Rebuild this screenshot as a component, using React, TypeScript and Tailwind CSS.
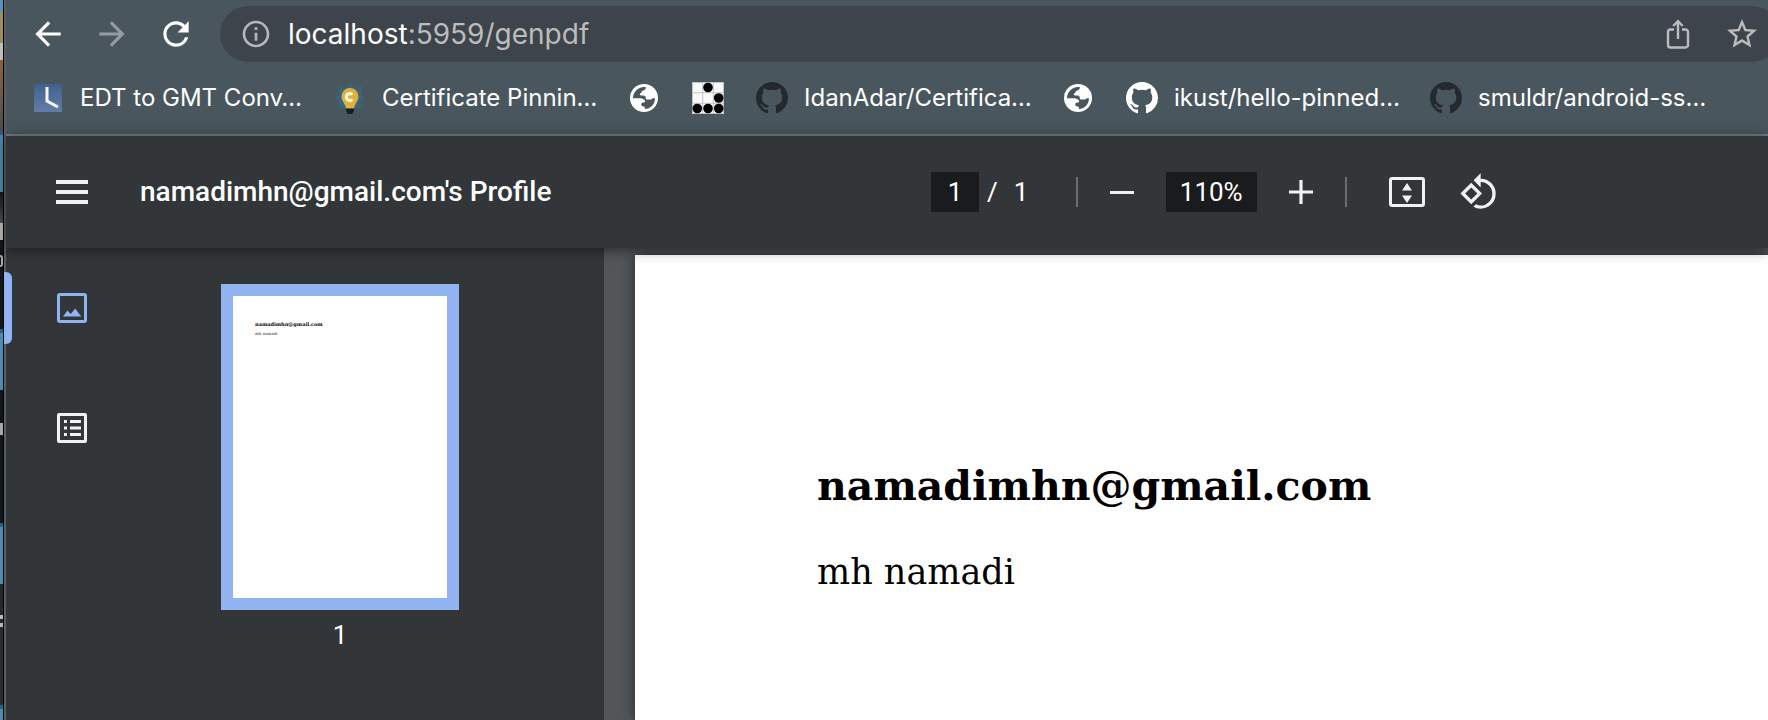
import type { ReactNode } from "react";
import {
  MdArrowBack,
  MdArrowForward,
  MdInfoOutline,
  MdRefresh,
  MdRotate90DegreesCcw,
  MdStarBorder,
} from "react-icons/md";

const GITHUB_PATH =
  "M8 0C3.58 0 0 3.58 0 8c0 3.54 2.29 6.53 5.47 7.59.4.07.55-.17.55-.38 0-.19-.01-.82-.01-1.49-2.01.37-2.53-.49-2.69-.94-.09-.23-.48-.94-.82-1.13-.28-.15-.68-.52-.01-.53.63-.01 1.08.58 1.23.82.72 1.21 1.87.87 2.33.66.07-.52.28-.87.51-1.07-1.78-.2-3.64-.89-3.64-3.95 0-.87.31-1.59.82-2.15-.08-.2-.36-1.02.08-2.12 0 0 .67-.21 2.2.82.64-.18 1.32-.27 2-.27s1.36.09 2 .27c1.53-1.04 2.2-.82 2.2-.82.44 1.1.16 1.92.08 2.12.51.56.82 1.27.82 2.15 0 3.07-1.87 3.75-3.65 3.95.29.25.54.73.54 1.48 0 1.07-.01 1.93-.01 2.2 0 .21.15.46.55.38A8.01 8.01 0 0 0 16 8c0-4.42-3.58-8-8-8z";

function GitHubMark({ className }: { className: string }) {
  return (
    <svg viewBox="0 0 16 16" className={`size-8 shrink-0 ${className}`} fill="currentColor" aria-hidden="true">
      <path d={GITHUB_PATH} />
    </svg>
  );
}

function GlobeIcon() {
  return (
    <svg viewBox="-2 -2 32 32" className="size-8 shrink-0" aria-hidden="true">
      <circle cx="14" cy="14" r="14" fill="#fff" />
      <path
        d="M3 14.2C3 8.4 7.4 3.6 13.2 3h2.600c.2 2.400-1.200 3.200-2.800 3.600-1.400.3-1 2.200-2.400 2.600-1.500.4-.6 2.200.4 2.200h2.200c2 0 2.600 1 2.600 2.800 0 1 .6 1.400 1.600 1.400h3.200c1 0 1.400-1.400 2.400-1.400h2c0 5.800-4.400 10.600-10.200 10.900v-2.300c-1.600 0-3.600-.5-3.600-2.200s1.400-2 3-2c1.200 0 1.200-2.600-.2-3.200-1.200-.5-2.200-1.200-3.800-1.200z"
        fill="#49565e"
      />
    </svg>
  );
}

function ClockFavicon() {
  return (
    <svg viewBox="0 0 32 32" className="size-8 shrink-0" aria-hidden="true">
      <defs>
        <linearGradient id="clock-face" x1="0" y1="0" x2="0" y2="1">
          <stop offset="0" stopColor="#3f6190" />
          <stop offset="1" stopColor="#647da6" />
        </linearGradient>
      </defs>
      <rect x="2" y="2" width="28" height="28" rx="1" fill="url(#clock-face)" />
      <path d="M15 5v14l11 6" fill="none" stroke="#f4f7fa" strokeWidth="3" />
    </svg>
  );
}

function BulbFavicon() {
  return (
    <svg viewBox="0 0 32 32" className="size-8 shrink-0" aria-hidden="true">
      <path d="M16 0l4 6 8-2-1 8 3 4-3 4 1 7-8-1-4 4-4-4-8 1 1-7-3-4 3-4-1-8 8 2z" fill="#3b637a" />
      <path d="M16 6a8.500 8.500 0 0 0-8.500 8.500c0 4 3 6 4.500 11.500h8c1.500-5.500 4.500-7.500 4.500-11.500A8.500 8.500 0 0 0 16 6z" fill="#e0b23c" />
      <path d="M18.500 12.500a3.600 3.600 0 1 0 0 5" fill="none" stroke="#fff8e4" strokeWidth="3" />
      <path d="M12 27h8v2l-2 3h-4l-2-3z" fill="#1b1c1e" />
    </svg>
  );
}

function GliderFavicon() {
  return (
    <svg viewBox="0 0 32 32" className="size-8 shrink-0" aria-hidden="true">
      <rect width="32" height="32" fill="#fafafa" />
      <path d="M10.700 0v32M21.300 0v32M0 10.700h32M0 21.300h32M.5.5h31v31H.5z" stroke="#c4c4c4" fill="none" />
      <g fill="#000">
        <circle cx="16" cy="5.500" r="4.800" />
        <circle cx="26.700" cy="16" r="4.800" />
        <circle cx="5.300" cy="26.500" r="4.800" />
        <circle cx="16" cy="26.500" r="4.800" />
        <circle cx="26.700" cy="26.500" r="4.800" />
      </g>
    </svg>
  );
}

function ShareIcon() {
  return (
    <svg viewBox="0 0 32 32" className="size-8" fill="none" stroke="currentColor" strokeWidth="2.400" aria-hidden="true">
      <path d="M12 11.500H8.500a2.500 2.500 0 0 0-2.500 2.500v13a2.500 2.500 0 0 0 2.500 2.500h15a2.500 2.500 0 0 0 2.500-2.500V14a2.500 2.500 0 0 0-2.500-2.500H20M16 21V3.500M11.200 8 16 3.200 20.800 8" />
    </svg>
  );
}

function FitPageIcon() {
  return (
    <svg viewBox="0 0 40 40" className="size-10" aria-hidden="true">
      <rect x="3.500" y="6.500" width="33" height="27" rx="1.500" fill="none" stroke="currentColor" strokeWidth="3" />
      <path d="M20 11l5 7.500H15zM20 31l5-7.500H15z" fill="currentColor" />
    </svg>
  );
}

function ThumbnailsIcon() {
  return (
    <svg viewBox="0 0 30 30" className="size-[30px]" aria-hidden="true">
      <rect x="1.500" y="1.500" width="27" height="27" rx="1.500" fill="none" stroke="currentColor" strokeWidth="3" />
      <path d="M6 23.500l4.500-6 3.200 3.500 4.500-5.500 6 8z" fill="currentColor" />
    </svg>
  );
}

function OutlineIcon() {
  return (
    <svg viewBox="0 0 30 30" className="size-[30px]" aria-hidden="true">
      <rect x="1.500" y="1.500" width="27" height="27" rx=".5" fill="none" stroke="currentColor" strokeWidth="3" />
      <path d="M7 7h3v3H7zM13 7h11v3H13zM7 13.500h3v3H7zM13 13.500h11v3H13zM7 20h3v3H7zM13 20h11v3H13z" fill="currentColor" />
    </svg>
  );
}

type Bookmark = { title: string; label?: string; width: string; icon: ReactNode };

const bookmarks: Bookmark[] = [
  { title: "EDT to GMT", label: "EDT to GMT Conv…", width: "w-[270px]", icon: <ClockFavicon /> },
  { title: "Certificate Pinning", label: "Certificate Pinnin…", width: "w-[262px]", icon: <BulbFavicon /> },
  { title: "Website", width: "w-8", icon: <GlobeIcon /> },
  { title: "Hacker emblem", width: "w-8", icon: <GliderFavicon /> },
  { title: "IdanAdar", label: "IdanAdar/Certifica…", width: "w-[274px]", icon: <GitHubMark className="text-[#24292e]" /> },
  { title: "Website", width: "w-8", icon: <GlobeIcon /> },
  { title: "ikust", label: "ikust/hello-pinned…", width: "w-[272px]", icon: <GitHubMark className="text-white" /> },
  { title: "smuldr", label: "smuldr/android-ss…", width: "w-[274px]", icon: <GitHubMark className="text-[#24292e]" /> },
];

function DesktopEdge() {
  return (
    <div className="flex w-1 shrink-0 flex-col overflow-hidden border-r border-black bg-[#10171b]" aria-hidden="true">
      <div className="h-3 shrink-0 bg-[#4f95be]" />
      <div className="h-[31px] shrink-0 bg-[#9c8d62]" />
      <div className="h-[17px] shrink-0 bg-[#bdbdbb]" />
      <div className="h-[71px] shrink-0 bg-linear-to-b from-[#8c6440] to-[#4a4d4c]" />
      <div className="h-[61px] shrink-0 border-t-4 border-[#28618f] bg-[#4c8cae]" />
      <div className="h-[31px] shrink-0 bg-linear-to-b from-[#14191c] to-[#48545a]" />
      <div className="h-[17px] shrink-0 bg-[#bdbdbb]" />
      <div className="h-[15px] shrink-0" />
      <div className="h-3 shrink-0 rounded-r-full border-2 border-l-0 border-[#a5a8a9]" />
      <div className="h-[62px] shrink-0" />
      <div className="h-[61px] shrink-0 border-t-4 border-[#28618f] bg-[#4c8cae]" />
      <div className="h-[33px] shrink-0" />
      <div className="h-3 shrink-0 bg-[#a5a8a9]" />
      <div className="h-[88px] shrink-0" />
      <div className="h-[61px] shrink-0 border-t-4 border-[#28618f] bg-[#4c8cae]" />
      <div className="h-[31px] shrink-0 bg-[#23292b]" />
      <div className="h-3 shrink-0 border-y-4 border-[#b5b8b8] bg-[#23292b]" />
      <div className="h-[78px] shrink-0 bg-[#272c2d]" />
      <div className="grow border-t-4 border-[#28618f] bg-[#4c8cae]" />
    </div>
  );
}

function BrowserChrome() {
  return (
    <header className="border-b-2 border-[#737e83] bg-[#49565e] font-[Inter,sans-serif] text-white">
      <div className="flex items-center pt-1.5">
        <nav className="flex shrink-0 items-center gap-[26px] pl-[23px]" aria-label="History">
          <button type="button" aria-label="Back">
            <MdArrowBack className="size-[38px]" />
          </button>
          <button type="button" aria-label="Forward" className="text-[#959ca1]" disabled>
            <MdArrowForward className="size-[38px]" />
          </button>
          <button type="button" aria-label="Reload">
            <MdRefresh className="size-[38px]" />
          </button>
        </nav>
        <div className="-mr-3 ml-[25px] flex h-14 grow items-center rounded-full bg-[#3d444b] pr-5 pl-5 text-[#bcbcbc]">
          <button type="button" aria-label="Site information">
            <MdInfoOutline className="size-8 text-[#b4b8bb]" />
          </button>
          <a href="#page" className="ml-4 grow text-[28px] leading-9 whitespace-nowrap">
            <span className="text-white">localhost</span>:5959/genpdf
          </a>
          <button type="button" aria-label="Share">
            <ShareIcon />
          </button>
          <button type="button" aria-label="Bookmark this page" className="ml-[30px]">
            <MdStarBorder className="size-9" />
          </button>
        </div>
      </div>
      <nav className="flex h-[72px] items-center gap-8 overflow-hidden pl-[26px]" aria-label="Bookmarks">
        {bookmarks.map((bookmark, index) => (
          <a
            key={index}
            href="#page"
            aria-label={bookmark.label ?? bookmark.title}
            className={`flex shrink-0 items-center gap-4 text-[24px] leading-8 whitespace-nowrap ${bookmark.width}`}
          >
            {bookmark.icon}
            {bookmark.label && <span>{bookmark.label}</span>}
          </a>
        ))}
      </nav>
    </header>
  );
}

function PdfToolbar() {
  return (
    <div className="relative z-10 flex h-28 items-center bg-[#323639] pl-[50px] text-[26px] leading-8 text-[#f1f1f1] shadow-[0_2px_12px_rgba(0,0,0,0.5)]">
      <button type="button" aria-label="Menu" className="flex w-8 shrink-0 flex-col gap-1.5">
        <span className="h-1 w-full bg-current" />
        <span className="h-1 w-full bg-current" />
        <span className="h-1 w-full bg-current" />
      </button>
      <h1 className="ml-[52px] w-[791px] shrink-0 text-[28px] font-medium whitespace-nowrap text-white">
        namadimhn@gmail.com's Profile
      </h1>
      <input
        type="text"
        aria-label="Page number"
        defaultValue="1"
        className="h-10 w-12 shrink-0 bg-[#191b1c] text-center text-white"
      />
      <span className="ml-2 text-white">/</span>
      <span className="ml-4 w-4 text-white">1</span>
      <span className="ml-[46px] h-[30px] w-0.5 shrink-0 bg-[#6b6e70]" />
      <button type="button" aria-label="Zoom out" className="ml-8 flex size-6 shrink-0 items-center">
        <span className="h-[3px] w-full bg-current" />
      </button>
      <input
        type="text"
        aria-label="Zoom level"
        defaultValue="110%"
        className="ml-8 h-10 w-[91px] shrink-0 bg-[#191b1c] text-center text-white"
      />
      <button type="button" aria-label="Zoom in" className="ml-8 shrink-0">
        <svg viewBox="0 0 24 24" className="size-6" aria-hidden="true">
          <path d="M0 12h24M12 0v24" stroke="currentColor" strokeWidth="3.200" />
        </svg>
      </button>
      <span className="ml-8 h-[30px] w-0.5 shrink-0 bg-[#6b6e70]" />
      <button type="button" aria-label="Fit to page" className="ml-10 shrink-0">
        <FitPageIcon />
      </button>
      <button type="button" aria-label="Rotate counterclockwise" className="ml-8 shrink-0">
        <MdRotate90DegreesCcw className="size-10" />
      </button>
    </div>
  );
}

function Sidebar() {
  return (
    <aside className="flex w-[598px] shrink-0 bg-[#323639]">
      <div className="relative flex w-[118px] shrink-0 flex-col items-start gap-[90px] pt-[45px] pl-[51px]">
        <span className="absolute top-6 -left-0.5 h-[72px] w-2 rounded-r-md bg-[#92b3f2]" />
        <button type="button" aria-label="Thumbnails" className="text-[#92b3f2]">
          <ThumbnailsIcon />
        </button>
        <button type="button" aria-label="Document outline" className="text-[#f1f1f1]">
          <OutlineIcon />
        </button>
      </div>
      <div className="flex w-[432px] flex-col items-center pt-9">
        <a
          href="#page"
          aria-label="Page 1"
          className="flex h-[326px] w-[238px] flex-col border-12 border-[#92b3f2] bg-white pt-[25px] pl-[22px] font-['DejaVu_Serif',serif] whitespace-nowrap text-black"
        >
          <span className="text-[5px] leading-[6px] font-bold">namadimhn@gmail.com</span>
          <span className="mt-1 text-[4px] leading-[6px] text-[#333]">mh namadi</span>
        </a>
        <span className="mt-2 text-[26px] leading-[34px] text-white">1</span>
      </div>
    </aside>
  );
}

export default function App() {
  return (
    <div className="flex min-h-screen overflow-hidden bg-[#525659] font-[Roboto,sans-serif]">
      <DesktopEdge />
      <div className="flex min-w-0 grow flex-col border-l-2 border-[#5b5e60]">
        <BrowserChrome />
        <PdfToolbar />
        <div className="flex grow">
          <Sidebar />
          <main className="flex grow pt-[7px] pl-[31px]">
            <article
              id="page"
              className="grow bg-white pt-[206px] pl-[182px] font-['DejaVu_Serif',serif] text-black shadow-[0_0_12px_rgba(0,0,0,0.55)]"
            >
              <h2 className="text-[41px] leading-[50px] font-bold">namadimhn@gmail.com</h2>
              <p className="mt-10 text-[35px] leading-[42px]">mh namadi</p>
            </article>
          </main>
        </div>
      </div>
    </div>
  );
}
